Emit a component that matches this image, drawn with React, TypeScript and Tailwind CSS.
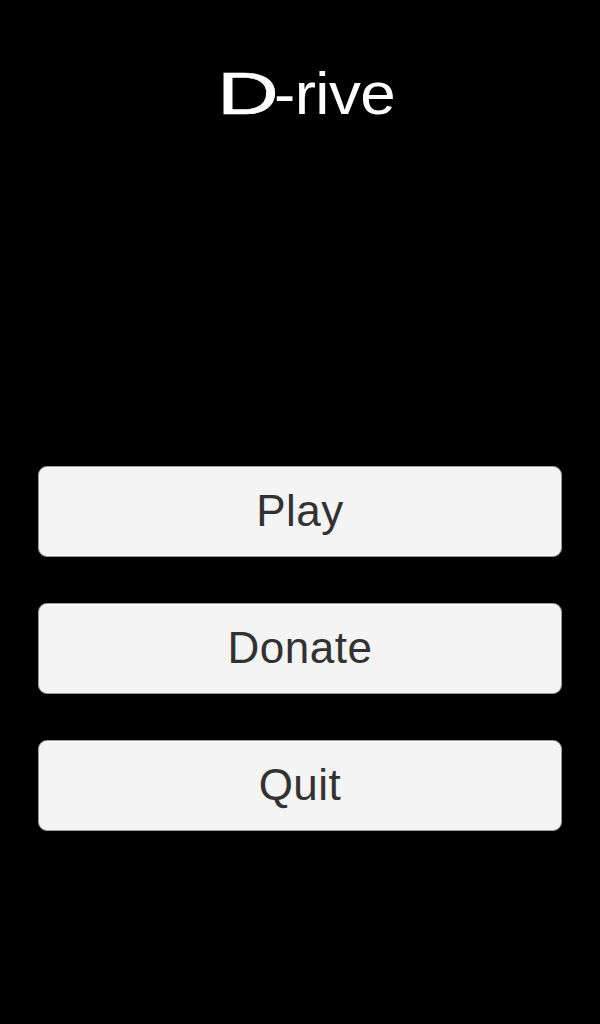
import React from 'react';

const MenuButton: React.FC<{ label: string }> = ({ label }) => (
  <button className="h-[91px] w-full rounded-[9px] border border-[#9a9a9a] bg-[#f4f4f4] pb-[2px] text-[44px] leading-none tracking-[0.5px] text-[#323232] shadow-[inset_0_1px_0_#ffffff]">
    {label}
  </button>
);

const App: React.FC = () => {
  return (
    <div
      className="flex h-[1024px] w-[600px] flex-col bg-black"
      style={{ fontFamily: '"Liberation Sans", Arial, sans-serif' }}
    >
      <h1 className="pt-[65px] pl-[4px] text-center text-[59px] leading-none tracking-[-0.5px] text-white">
        <span className="mr-[15px] inline-block origin-left scale-x-[1.45] [-webkit-text-stroke:0.6px_white]">D</span>
        <span className="inline-block origin-left scale-x-[1.08]">-rive</span>
      </h1>
      <div className="mt-[342px] flex flex-col gap-[46px] px-[38px]">
        <MenuButton label="Play" />
        <MenuButton label="Donate" />
        <MenuButton label="Quit" />
      </div>
    </div>
  );
};

export default App;
